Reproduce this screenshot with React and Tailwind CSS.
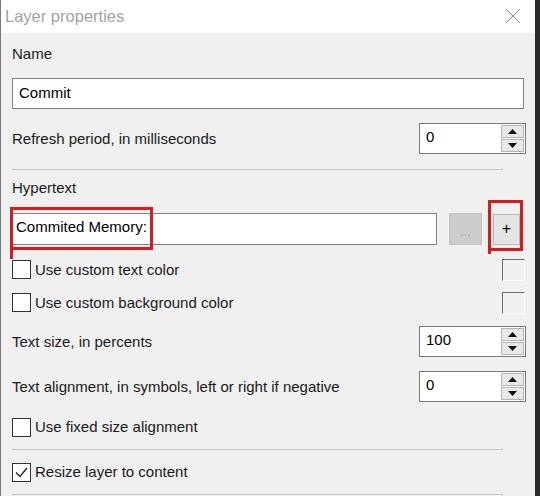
import React from "react";

const font = { fontFamily: '"Liberation Sans", Arial, sans-serif' };

function Spin({ value }) {
  return (
    <div className="flex w-[107px] h-[31px] border border-[#7a7a7a] bg-white">
      <div className="flex-1 pl-[6px] pt-[3px] text-[15px] leading-[20px] text-black">{value}</div>
      <div className="flex flex-col w-[24px] gap-[1px] p-[1px] pl-0">
        <div className="flex-1 flex items-center justify-center bg-[#e8e8e8] border border-[#b5b5b5]">
          <svg width="9" height="5" viewBox="0 0 9 5"><polygon points="0,5 9,5 4.5,0" fill="#111" /></svg>
        </div>
        <div className="flex-1 flex items-center justify-center bg-[#e8e8e8] border border-[#b5b5b5]">
          <svg width="9" height="5" viewBox="0 0 9 5"><polygon points="0,0 9,0 4.5,5" fill="#111" /></svg>
        </div>
      </div>
    </div>
  );
}

function Check({ checked, label }) {
  return (
    <div className="flex items-center gap-[4px]">
      <div className="w-[19px] h-[19px] border border-[#333] bg-white flex items-center justify-center">
        {checked && (
          <svg width="15" height="15" viewBox="0 0 15 15">
            <polyline points="2,7.5 6,11.5 13,3" fill="none" stroke="#222" strokeWidth="1.4" />
          </svg>
        )}
      </div>
      <span className="text-[15px] leading-[20px] text-[#1a1a1a]">{label}</span>
    </div>
  );
}

function Swatch() {
  return <div className="w-[23px] h-[22px] border-t border-l border-[#6d6d6d] border-b border-r border-b-[#fafafa] border-r-[#fafafa] bg-[#f0f0f0]" />;
}

function Sep() {
  return <div className="w-[491px] h-px bg-[#c6c6c6]" />;
}

export default function App() {
  return (
    <div className="flex w-[540px] h-[496px] overflow-hidden" style={font}>
      <div className="w-[535px] h-full flex flex-col border-l border-[#7a7a7a] bg-[#f0f0f0]">
        <div className="h-[33px] bg-white flex items-center justify-between pl-[4px] pr-[14px] shrink-0">
          <span className="text-[16.5px] text-[#a3a3a3] leading-[22px] -mt-[1px]">Layer properties</span>
          <svg width="16" height="16" viewBox="0 0 16 16" className="-mt-[2px]">
            <path d="M1 1 L15 15 M15 1 L1 15" stroke="#8a8a8a" strokeWidth="1" />
          </svg>
        </div>
        <div className="flex flex-col pl-[11px] pr-[9px] text-[15px] text-[#1a1a1a]">
          <div className="pt-[11px] h-[31px] leading-[20px]">Name</div>
          <div className="mt-[14px] h-[31px] w-[512px] border border-[#828282] bg-white pl-[6px] flex items-center text-[15px] leading-[20px] text-black">
            <span className="-mt-[2px]">Commit</span>
          </div>
          <div className="mt-[14px] flex items-center justify-between h-[31px]">
            <span className="leading-[20px]">Refresh period, in milliseconds</span>
            <Spin value="0" />
          </div>
          <div className="mt-[15px]"><Sep /></div>
          <div className="mt-[8px] h-[20px] leading-[20px]">Hypertext</div>
          <div className="relative mt-[15px] h-[32px] flex items-center">
            <div className="w-[425px] h-[32px] border border-[#828282] bg-white pl-[3px] pt-[3px] leading-[20px] text-black">Commited Memory:</div>
            <div className="ml-[12px] w-[33px] h-[32px] bg-[#cccccc] border border-[#c4c4c4] flex items-center justify-center pt-[6px] text-[12px] text-[#a0a0a0]">...</div>
            <div className="ml-[11px] w-[27px] h-[31px] bg-[#e4e4e4] border border-[#b8b8b8] flex items-center justify-center text-[16px] text-black">+</div>
            <div className="absolute left-[-2px] top-[-6px] w-[143px] h-[43px] border-[3px] border-[#d11d1d]" />
            <div className="absolute left-[-2px] top-[36px] w-[3px] h-[10px] bg-[#d11d1d]" />
            <div className="absolute left-[476px] top-[-13px] w-[35px] h-[51px] border-[3px] border-[#d11d1d]" />
            <div className="absolute left-[476px] top-[37px] w-[3px] h-[4px] bg-[#d11d1d]" />
          </div>
          <div className="mt-[13px] h-[23px] flex items-center justify-between pr-[1px]">
            <Check label="Use custom text color" />
            <Swatch />
          </div>
          <div className="mt-[10px] h-[23px] flex items-center justify-between pr-[1px]">
            <Check label="Use custom background color" />
            <Swatch />
          </div>
          <div className="mt-[12px] flex items-center justify-between h-[31px]">
            <span className="leading-[20px]">Text size, in percents</span>
            <Spin value="100" />
          </div>
          <div className="mt-[14px] flex items-center justify-between h-[31px]">
            <span className="leading-[20px]">Text alignment, in symbols, left or right if negative</span>
            <Spin value="0" />
          </div>
          <div className="mt-[15px] h-[20px] flex items-center">
            <Check label="Use fixed size alignment" />
          </div>
          <div className="mt-[12px]"><Sep /></div>
          <div className="mt-[12px] h-[20px] flex items-center">
            <Check checked label="Resize layer to content" />
          </div>
          <div className="mt-[12px]"><Sep /></div>
        </div>
      </div>
      <div className="w-[5px] h-full bg-[#2a2a2a]" />
    </div>
  );
}
